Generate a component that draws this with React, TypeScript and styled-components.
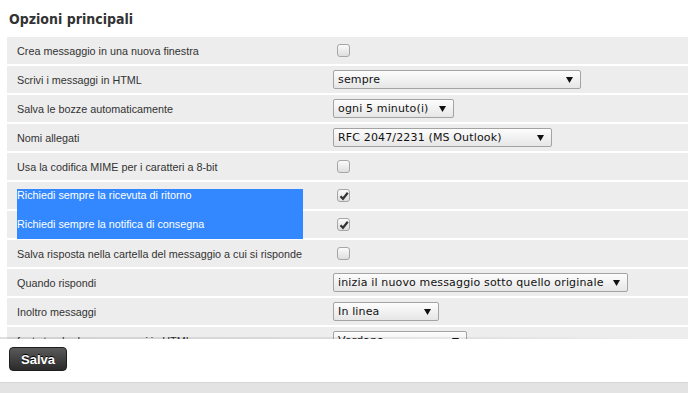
import styled, {createGlobalStyle} from 'styled-components'

const GlobalStyle = createGlobalStyle`
    html, body {
        margin: 0;
        padding: 0;
        background: #fff;
        overflow: hidden;
    }
    body {
        font-family: "Liberation Sans", Arial, sans-serif;
        color: #333;
    }
`

type Option = {
    label: string
    kind: 'check' | 'select'
    checked?: boolean
    value?: string
    width?: number
    sel?: 'start' | 'end'
}

const options: Option[] = [
    {label: 'Crea messaggio in una nuova finestra', kind: 'check'},
    {label: 'Scrivi i messaggi in HTML', kind: 'select', value: 'sempre', width: 248},
    {label: 'Salva le bozze automaticamente', kind: 'select', value: 'ogni 5 minuto(i)', width: 121},
    {label: 'Nomi allegati', kind: 'select', value: 'RFC 2047/2231 (MS Outlook)', width: 219},
    {label: 'Usa la codifica MIME per i caratteri a 8-bit', kind: 'check'},
    {label: 'Richiedi sempre la ricevuta di ritorno', kind: 'check', checked: true, sel: 'start'},
    {label: 'Richiedi sempre la notifica di consegna', kind: 'check', checked: true, sel: 'end'},
    {label: 'Salva risposta nella cartella del messaggio a cui si risponde', kind: 'check'},
    {label: 'Quando rispondi', kind: 'select', value: 'inizia il nuovo messaggio sotto quello originale', width: 295},
    {label: 'Inoltro messaggi', kind: 'select', value: 'In linea', width: 106},
    {label: 'font standard per messaggi in HTML', kind: 'select', value: 'Verdana', width: 134},
]

const Arrow = () => (
    <svg width="7" height="6" viewBox="0 0 7 6">
        <path d="M0 0H7L3.5 6Z" fill="#111"/>
    </svg>
)

const Tick = () => (
    <svg width="10" height="10" viewBox="0 0 10 10">
        <path d="M1.5 5.2L4 7.8L8.8 1.8" stroke="#333" strokeWidth="2.2" fill="none"/>
    </svg>
)

export default function App() {
    return (
        <Page>
            <GlobalStyle/>
            <Title>Opzioni principali</Title>
            <Scroller>
                {options.map(o => (
                    <Row key={o.label}>
                        <Label $sel={o.sel}>
                            {o.sel ? <Selection $sel={o.sel}>{o.label}</Selection> : o.label}
                        </Label>
                        <Value>
                            {o.kind === 'check'
                                ? <CheckBox>{o.checked && <Tick/>}</CheckBox>
                                : <SelectBox $width={o.width || 120}>
                                    <span>{o.value}</span>
                                    <Arrow/>
                                </SelectBox>}
                        </Value>
                    </Row>
                ))}
            </Scroller>
            <Footer>
                <SaveButton>Salva</SaveButton>
            </Footer>
            <BottomBar/>
        </Page>
    )
}

const Page = styled.div`
    height: 393px;
    display: flex;
    flex-direction: column;
`

const Title = styled.h2`
    margin: 0;
    padding: 11px 9px 0;
    height: 26px;
    font-size: 14px;
    line-height: 17px;
    font-weight: bold;
    font-family: "DejaVu Sans Condensed", "DejaVu Sans", sans-serif;
    font-stretch: condensed;
    color: #333;
`

const Scroller = styled.div`
    height: 302px;
    padding-left: 7px;
    overflow: hidden;
    position: relative;

    &::after {
        content: "";
        position: absolute;
        left: 0;
        bottom: 0;
        width: 640px;
        height: 2px;
        background: linear-gradient(to right, rgba(0, 0, 0, 0.12), rgba(0, 0, 0, 0.06) 70%, rgba(0, 0, 0, 0));
    }
`

const Row = styled.div`
    display: grid;
    grid-template-columns: 326px 1fr;
    height: 27px;
    margin-bottom: 2px;
    background: #ededed;
`

const Label = styled.div<{ $sel?: 'start' | 'end' }>`
    display: flex;
    align-items: ${p => p.$sel ? 'stretch' : 'center'};
    padding: ${p => p.$sel === 'start' ? '7px 30px 0 10px' : '0 30px 0 10px'};
    font-size: 10.8px;
    white-space: nowrap;
`

const Selection = styled.div<{ $sel: 'start' | 'end' }>`
    flex: 1;
    display: flex;
    align-items: ${p => p.$sel === 'start' ? 'flex-start' : 'center'};
    line-height: 13px;
    margin-bottom: ${p => p.$sel === 'start' ? '-2px' : '-1px'};
    padding-bottom: ${p => p.$sel === 'start' ? '2px' : '1px'};
    background: #3388ff;
    color: #fff;
    position: relative;
    z-index: 1;
`

const Value = styled.div`
    display: flex;
    align-items: center;
`

const CheckBox = styled.span`
    box-sizing: border-box;
    width: 13px;
    height: 13px;
    margin-left: 4px;
    display: flex;
    align-items: center;
    justify-content: center;
    border: 1px solid #a6a6a6;
    border-radius: 3px;
    background: linear-gradient(#fbfbfb, #dedede);
`

const SelectBox = styled.div<{ $width: number }>`
    box-sizing: border-box;
    width: ${p => p.$width}px;
    height: 19px;
    display: flex;
    align-items: center;
    justify-content: space-between;
    padding: 0 7px 0 4px;
    border: 1px solid #a3a3a3;
    border-radius: 2px;
    background: linear-gradient(#fdfdfd, #e6e6e6);
    font-family: "DejaVu Sans", sans-serif;
    font-size: 11px;
    letter-spacing: 0.15px;
    color: #111;
    white-space: nowrap;
`

const Footer = styled.div`
    padding: 8px 9px 0;
    height: 35px;
`

const SaveButton = styled.button`
    width: 58px;
    height: 24px;
    padding: 0;
    border: 1px solid #1e1e1e;
    border-radius: 4px;
    background: linear-gradient(#5a5a5a, #2a2a2a);
    color: #fff;
    font-family: "Liberation Sans", Arial, sans-serif;
    font-size: 13px;
    font-weight: bold;
    text-shadow: 0 -1px 0 #000;
`

const BottomBar = styled.div`
    flex: 1;
    background: #e3e3e3;
    border-top: 1px solid #d6d6d6;
`
